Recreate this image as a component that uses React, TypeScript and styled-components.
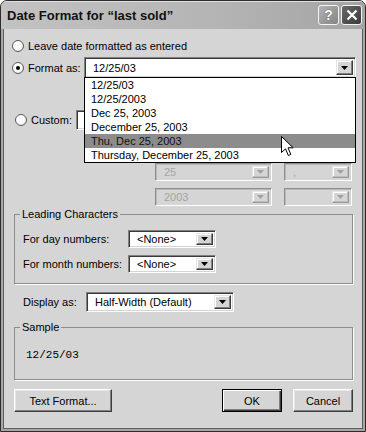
import styled, { createGlobalStyle, css } from "styled-components";

const GlobalStyle = createGlobalStyle`
  html, body {
    margin: 0;
    padding: 0;
    background: #ffffff;
  }
  body {
    font-family: "Liberation Sans", Arial, sans-serif;
    font-size: 11px;
    color: #000;
  }
`;

const Window = styled.div`
  width: 366px;
  height: 432px;
  box-sizing: border-box;
  border: 1px solid #2c2c2c;
  border-radius: 7px 7px 0 0;
  background: #a6a6a6;
  display: flex;
  flex-direction: column;
  overflow: hidden;
`;

const TitleBar = styled.div`
  height: 28px;
  flex: none;
  display: flex;
  align-items: center;
  padding: 0 3px 0 6px;
  background: linear-gradient(to right, #c2c2c2 0%, #b4b4b4 60%, #a4a4a4 100%);
  box-shadow: inset 0 1px 0 #e0e0e0;
`;

const Title = styled.div`
  flex: 1;
  font-size: 13px;
  font-weight: bold;
  color: #111;
  padding-top: 1px;
`;

const TitleButton = styled.div<{ $dark?: boolean }>`
  width: 21px;
  height: 20px;
  margin-left: 2px;
  box-sizing: border-box;
  border: 1px solid #f4f4f4;
  border-radius: 3px;
  display: flex;
  align-items: center;
  justify-content: center;
  color: #fff;
  font-size: 14px;
  font-weight: bold;
  text-shadow: 0 0 1px #333;
  background: ${(p) =>
    p.$dark
      ? "linear-gradient(135deg, #6a6a6a, #3a3a3a)"
      : "linear-gradient(135deg, #b4b4b4, #848484)"};
`;

const Frame = styled.div`
  flex: 1;
  display: flex;
  padding: 0 2px 2px;
`;

const Client = styled.div`
  flex: 1;
  display: flex;
  flex-direction: column;
  background: #d5d5d5;
  border: 1px solid #5e5e5e;
  border-top: none;
  padding: 0 6px 0 8px;
`;

const Row = styled.div<{ $top: number; $h: number; $left?: number }>`
  display: flex;
  align-items: center;
  margin-top: ${(p) => p.$top}px;
  margin-left: ${(p) => p.$left ?? 0}px;
  height: ${(p) => p.$h}px;
  flex: none;
`;

const RadioCircle = styled.span`
  width: 12px;
  height: 12px;
  box-sizing: border-box;
  flex: none;
  border-radius: 50%;
  border: 1px solid #5c5c5c;
  background: radial-gradient(circle at 40% 40%, #ffffff 0%, #ffffff 45%, #cfcfcf 100%);
  display: flex;
  align-items: center;
  justify-content: center;
`;

const RadioDot = styled.span`
  width: 4px;
  height: 4px;
  border-radius: 50%;
  background: #000;
`;

const Label = styled.span<{ $w?: number }>`
  ${(p) =>
    p.$w !== undefined &&
    css`
      width: ${p.$w}px;
      flex: none;
    `}
  white-space: nowrap;
`;

const RadioLabel = styled(Label)`
  margin-left: 4px;
`;

const SelectBox = styled.div<{ $w: number; $h: number; $disabled?: boolean; $ml?: number }>`
  position: relative;
  width: ${(p) => p.$w}px;
  height: ${(p) => p.$h}px;
  margin-left: ${(p) => p.$ml ?? 0}px;
  flex: none;
  box-sizing: border-box;
  display: flex;
  align-items: stretch;
  background: ${(p) => (p.$disabled ? "#d5d5d5" : "#ffffff")};
  border: 1px solid;
  border-color: ${(p) =>
    p.$disabled ? "#8e8e8e #ffffff #ffffff #8e8e8e" : "#808080 #ffffff #ffffff #808080"};
  box-shadow: ${(p) =>
    p.$disabled
      ? "inset 1px 1px 0 #b8b8b8"
      : "inset 1px 1px 0 #3a3a3a, inset -1px -1px 0 #d4d4d4"};
  padding: 2px;
`;

const SelectText = styled.span<{ $disabled?: boolean }>`
  flex: 1;
  display: flex;
  align-items: center;
  padding-left: 6px;
  white-space: nowrap;
  color: ${(p) => (p.$disabled ? "#a4a4a4" : "#000")};
`;

const ArrowButton = styled.span<{ $disabled?: boolean }>`
  width: 17px;
  flex: none;
  box-sizing: border-box;
  background: #d5d5d5;
  border: 1px solid;
  border-color: ${(p) =>
    p.$disabled ? "#e6e6e6 #9a9a9a #9a9a9a #e6e6e6" : "#e6e6e6 #3c3c3c #3c3c3c #e6e6e6"};
  box-shadow: inset -1px -1px 0 ${(p) => (p.$disabled ? "#bdbdbd" : "#808080")},
    inset 1px 1px 0 #ffffff;
  display: flex;
  align-items: center;
  justify-content: center;
`;

const DropList = styled.div`
  position: absolute;
  top: 100%;
  left: -1px;
  right: -1px;
  z-index: 2;
  background: #fff;
  border: 1px solid #000;
`;

const DropItem = styled.div<{ $active?: boolean }>`
  height: 14px;
  line-height: 14px;
  padding-left: 6px;
  white-space: nowrap;
  background: ${(p) => (p.$active ? "#8c8c8c" : "transparent")};
  color: ${(p) => (p.$active ? "#111" : "#000")};
`;

const Cursor = styled.svg`
  position: absolute;
  left: 196px;
  top: 58px;
`;

const Group = styled.fieldset<{ $top: number; $pt: number }>`
  margin: ${(p) => p.$top}px 0 0 2px;
  width: 339px;
  min-width: 0;
  box-sizing: border-box;
  border: 1px solid #8c8c8c;
  box-shadow: 1px 1px 0 #ffffff;
  padding: ${(p) => p.$pt}px 8px 10px;
  display: flex;
  flex-direction: column;
  flex: none;
`;

const Legend = styled.legend`
  padding: 0 2px;
  margin-left: -3px;
  line-height: 13px;
  font-size: 11px;
`;

const SampleText = styled.div`
  font-family: "Liberation Mono", "Courier New", monospace;
  font-size: 11px;
  line-height: 13px;
  margin: 0 0 7px 3px;
`;

const ButtonBar = styled.div`
  display: flex;
  align-items: center;
  justify-content: space-between;
  margin: 9px 3px 0 2px;
  flex: none;
`;

const ButtonGroup = styled.div`
  display: flex;
  gap: 11px;
`;

const Button = styled.button<{ $w: number; $default?: boolean }>`
  width: ${(p) => p.$w}px;
  height: 23px;
  padding: 0;
  font-family: "Liberation Sans", Arial, sans-serif;
  font-size: 11px;
  color: #000;
  background: #d5d5d5;
  border: 1px solid;
  ${(p) =>
    p.$default
      ? css`
          border-color: #000;
          box-shadow: inset 1px 1px 0 #ffffff, inset -1px -1px 0 #3c3c3c,
            inset -2px -2px 0 #808080;
        `
      : css`
          border-color: #ffffff #3c3c3c #3c3c3c #ffffff;
          box-shadow: inset -1px -1px 0 #808080, inset 1px 1px 0 #e6e6e6;
        `}
`;

const Arrow = ({ disabled }: { disabled?: boolean }) => (
  <svg width="7" height="4" viewBox="0 0 7 4">
    <polygon points="0,0 7,0 3.5,4" fill={disabled ? "#a0a0a0" : "#000"} />
  </svg>
);

type SelectProps = {
  w: number;
  h?: number;
  ml?: number;
  value?: string;
  disabled?: boolean;
  children?: React.ReactNode;
};

const Select = ({ w, h = 20, ml, value = "", disabled, children }: SelectProps) => (
  <SelectBox $w={w} $h={h} $ml={ml} $disabled={disabled}>
    <SelectText $disabled={disabled}>{value}</SelectText>
    <ArrowButton $disabled={disabled}>
      <Arrow disabled={disabled} />
    </ArrowButton>
    {children}
  </SelectBox>
);

const Radio = ({ checked }: { checked?: boolean }) => (
  <RadioCircle>{checked && <RadioDot />}</RadioCircle>
);

const formats = [
  "12/25/03",
  "12/25/2003",
  "Dec 25, 2003",
  "December 25, 2003",
  "Thu, Dec 25, 2003",
  "Thursday, December 25, 2003",
];

const App = () => {
  return (
    <>
      <GlobalStyle />
      <Window>
        <TitleBar>
          <Title>Date Format for “last sold”</Title>
          <TitleButton>?</TitleButton>
          <TitleButton $dark>
            <svg width="12" height="12" viewBox="0 0 12 12">
              <path d="M1.5 1.5 L10.5 10.5 M10.5 1.5 L1.5 10.5" stroke="#fff" strokeWidth="2.2" />
            </svg>
          </TitleButton>
        </TitleBar>
        <Frame>
          <Client>
            <Row $top={9} $h={16}>
              <Radio />
              <RadioLabel>Leave date formatted as entered</RadioLabel>
            </Row>
            <Row $top={3} $h={21}>
              <Radio checked />
              <RadioLabel $w={56}>Format as:</RadioLabel>
              <Select w={272} h={21} value="12/25/03">
                <DropList>
                  {formats.map((f, i) => (
                    <DropItem key={f} $active={i === 4}>
                      {f}
                    </DropItem>
                  ))}
                  <Cursor width="14" height="21" viewBox="0 0 14 21">
                    <path
                      d="M0.5 0.5 L0.5 16.5 L4.5 12.8 L7.3 19.5 L9.8 18.4 L7 11.8 L12.2 11.8 Z"
                      fill="#fff"
                      stroke="#000"
                      strokeWidth="1"
                    />
                  </Cursor>
                </DropList>
              </Select>
            </Row>
            <Row $top={32} $h={20} $left={3}>
              <Radio />
              <RadioLabel $w={45}>Custom:</RadioLabel>
              <Select w={196} />
              <Select w={68} ml={12} />
            </Row>
            <Row $top={33} $h={18} $left={143}>
              <Select w={117} h={18} value="25" disabled />
              <Select w={68} h={18} ml={12} value="," disabled />
            </Row>
            <Row $top={7} $h={18} $left={143}>
              <Select w={117} h={18} value="2003" disabled />
              <Select w={68} h={18} ml={12} disabled />
            </Row>
            <Group $top={2} $pt={9}>
              <Legend>Leading Characters</Legend>
              <Row $top={0} $h={18}>
                <Label $w={105}>For day numbers:</Label>
                <Select w={88} h={18} value="<None>" />
              </Row>
              <Row $top={7} $h={18}>
                <Label $w={105}>For month numbers:</Label>
                <Select w={88} h={18} value="<None>" />
              </Row>
            </Group>
            <Row $top={8} $h={20} $left={11}>
              <Label $w={63}>Display as:</Label>
              <Select w={148} value="Half-Width (Default)" />
            </Row>
            <Group $top={9} $pt={15}>
              <Legend>Sample</Legend>
              <SampleText>12/25/03</SampleText>
            </Group>
            <ButtonBar>
              <Button $w={98}>Text Format...</Button>
              <ButtonGroup>
                <Button $w={60} $default>
                  OK
                </Button>
                <Button $w={60}>Cancel</Button>
              </ButtonGroup>
            </ButtonBar>
          </Client>
        </Frame>
      </Window>
    </>
  );
};

export default App;
